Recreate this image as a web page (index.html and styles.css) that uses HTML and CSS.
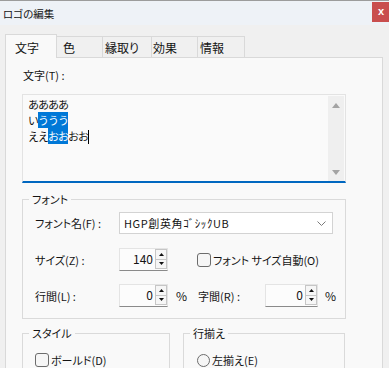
FILE: index.html
```html
<!DOCTYPE html>
<html lang="ja">
<head>
<meta charset="utf-8">
<link rel="stylesheet" href="styles.css">
</head>
<body>
<div class="window">
  <div class="titlebar">
    <span class="title">ロゴの編集</span>
    <span class="close">x</span>
  </div>
  <div class="content">
    <div class="tabs">
      <div class="tab tab1 selected">文字</div>
      <div class="tab tab2">色</div>
      <div class="tab tab3">縁取り</div>
      <div class="tab tab4">効果</div>
      <div class="tab tab5">情報</div>
    </div>
    <div class="panel">
      <div class="field-label">文字(T) :</div>
      <div class="textbox">
        <div class="text">
          <div class="line">ああああ</div>
          <div class="line">い<span class="hl">ううう</span></div>
          <div class="line">ええ<span class="hl">おお</span>おお<span class="caret"></span></div>
        </div>
        <div class="vscroll">
          <svg class="arrow" width="8" height="5" viewBox="0 0 8 5"><path d="M0 5 L4 0 L8 5 Z" fill="#a3a3a3"/></svg>
          <svg class="arrow" width="8" height="5" viewBox="0 0 8 5"><path d="M0 0 L4 5 L8 0 Z" fill="#a3a3a3"/></svg>
        </div>
      </div>

      <div class="group font-group">
        <span class="legend">フォント</span>
        <div class="rows">
          <div class="row">
            <span class="row-label">フォント名(F) :</span>
            <div class="select">
              <span class="select-text">HGP創英角ｺﾞｼｯｸUB</span>
              <svg class="chev" width="9" height="5" viewBox="0 0 9 5"><path d="M0.5 0.5 L4.5 4.5 L8.5 0.5" fill="none" stroke="#7a7a7a" stroke-width="1"/></svg>
            </div>
          </div>
          <div class="row">
            <span class="row-label">サイズ(Z) :</span>
            <div class="spin">
              <span class="spin-value">140</span>
              <div class="spin-btns">
                <span class="spin-btn"><svg width="5" height="3" viewBox="0 0 5 3"><path d="M0 3 L2.5 0 L5 3 Z" fill="#111"/></svg></span>
                <span class="spin-btn"><svg width="5" height="3" viewBox="0 0 5 3"><path d="M0 0 L2.5 3 L5 0 Z" fill="#111"/></svg></span>
              </div>
            </div>
            <span class="check auto-check"></span>
            <span class="check-text">フォント サイズ自動(O)</span>
          </div>
          <div class="row">
            <span class="row-label">行間(L) :</span>
            <div class="spin">
              <span class="spin-value">0</span>
              <div class="spin-btns">
                <span class="spin-btn"><svg width="5" height="3" viewBox="0 0 5 3"><path d="M0 3 L2.5 0 L5 3 Z" fill="#111"/></svg></span>
                <span class="spin-btn"><svg width="5" height="3" viewBox="0 0 5 3"><path d="M0 0 L2.5 3 L5 0 Z" fill="#111"/></svg></span>
              </div>
            </div>
            <span class="pct pct1">%</span>
            <span class="row-label2">字間(R) :</span>
            <div class="spin spin-wide">
              <span class="spin-value">0</span>
              <div class="spin-btns">
                <span class="spin-btn"><svg width="5" height="3" viewBox="0 0 5 3"><path d="M0 3 L2.5 0 L5 3 Z" fill="#111"/></svg></span>
                <span class="spin-btn"><svg width="5" height="3" viewBox="0 0 5 3"><path d="M0 0 L2.5 3 L5 0 Z" fill="#111"/></svg></span>
              </div>
            </div>
            <span class="pct pct2">%</span>
          </div>
        </div>
      </div>

      <div class="bottom-groups">
        <div class="group style-group">
          <span class="legend">スタイル</span>
          <div class="opt-row">
            <span class="check"></span>
            <span class="check-text">ボールド(D)</span>
          </div>
        </div>
        <div class="group align-group">
          <span class="legend">行揃え</span>
          <div class="opt-row">
            <span class="radio"></span>
            <span class="check-text">左揃え(E)</span>
          </div>
        </div>
      </div>
    </div>
  </div>
</div>
</body>
</html>
```

FILE: styles.css
```css
* { box-sizing: border-box; }

html, body {
  margin: 0;
  padding: 0;
  width: 389px;
  height: 368px;
  overflow: hidden;
  background: #f0f0f0;
}

body {
  font-family: "Noto Sans CJK JP", "Noto Sans", sans-serif;
  font-size: 11px;
  font-feature-settings: "palt";
  color: #141414;
}

.window {
  width: 389px;
  height: 368px;
  border-top: 1px solid #9c9c9c;
  overflow: hidden;
}

.titlebar {
  display: flex;
  align-items: flex-start;
  height: 24px;
  background: #eef2f7;
}

.title {
  padding: 5px 0 0 3px;
  line-height: 16px;
  font-size: 10.5px;
}

.close {
  margin-left: auto;
  margin-top: 1px;
  width: 17px;
  height: 20px;
  background: #c94e4e;
  color: #fff;
  font-family: "Liberation Sans", sans-serif;
  font-size: 11px;
  font-weight: bold;
  line-height: 18px;
  text-align: center;
  padding-left: 1px;
}

.content {
  padding: 9px 6px 0 5px;
}

.tabs {
  display: flex;
  align-items: flex-end;
  height: 23px;
  font-size: 12px;
}

.tab {
  height: 21px;
  border: 1px solid #d9d9d9;
  border-bottom: none;
  border-left: none;
  background: #f0f0f0;
  line-height: 16px;
  padding-top: 3px;
}

.tab.selected {
  position: relative;
  z-index: 1;
  height: 24px;
  margin-bottom: -1px;
  border-left: 1px solid #d9d9d9;
  background: #f9f9f9;
  padding-top: 5px;
}

.tab1 { width: 52px; padding-left: 9px; }
.tab2 { width: 46px; padding-left: 6px; }
.tab3 { width: 49px; padding-left: 2px; }
.tab4 { width: 46px; padding-left: 1px; }
.tab5 { width: 47px; padding-left: 2px; }

.panel {
  width: 378px;
  height: 330px;
  border: 1px solid #d9d9d9;
  background: #f9f9f9;
  padding: 9px 0 0 16px;
}

.field-label {
  line-height: 16px;
  padding-left: 1px;
}

.textbox {
  display: flex;
  width: 324px;
  height: 89px;
  margin-top: 11px;
  border: 1px solid #e3e3e3;
  border-bottom: 2px solid #0067c0;
  background: #fafafa;
}

.text {
  flex: 1;
  padding: 1px 0 0 5px;
  font-feature-settings: normal;
  letter-spacing: -1px;
}

.line {
  line-height: 16px;
  height: 16px;
}

.hl {
  background: #0078d7;
  color: #fff;
}

.caret {
  display: inline-block;
  width: 1px;
  height: 14px;
  background: #000;
  vertical-align: -3px;
  margin-left: 0;
}

.vscroll {
  width: 16px;
  margin: 1px 1px 0 0;
  background: #efefef;
  display: flex;
  flex-direction: column;
  justify-content: space-between;
  align-items: center;
  padding: 7px 0 6px;
}

.arrow { display: block; }

.group {
  border: 1px solid #dadada;
}

.legend {
  display: block;
  width: fit-content;
  margin: -9px 0 0 6px;
  padding: 0 3px;
  line-height: 16px;
  background: #f9f9f9;
}

.font-group {
  width: 324px;
  margin-top: 16px;
}

.rows {
  display: flex;
  flex-direction: column;
  gap: 14px;
  padding: 5px 11px 11px 12px;
}

.row {
  display: flex;
  align-items: center;
  height: 22px;
}

.row > * { flex-shrink: 0; }

.row + .row { height: 23px; }
.row + .row + .row { margin-top: -1px; }

.row-label {
  width: 84px;
  line-height: 16px;
}

.select {
  width: 214px;
  height: 22px;
  border: 1px solid #d3d3d3;
  background: #fff;
  display: flex;
  align-items: center;
  padding: 0 6px 0 4px;
}

.select-text {
  flex: 1;
  letter-spacing: 0.6px;
  line-height: 16px;
}

.chev { display: block; }

.spin {
  width: 49px;
  height: 23px;
  display: flex;
  border: 1px solid #e4e4e4;
  border-bottom-color: #8a8a8a;
  background: #fcfcfc;
}

.spin-wide { width: 53px; }

.spin-value {
  flex: 1;
  text-align: right;
  padding-right: 2px;
  line-height: 20px;
  font-size: 12px;
}

.spin-btns {
  width: 12px;
  display: flex;
  flex-direction: column;
  padding: 0 0 1px;
}

.spin-btn {
  flex: 1;
  border: 1px solid #c6c6c6;
  background: #f6f6f6;
  display: flex;
  align-items: center;
  justify-content: center;
}

.spin-btn + .spin-btn { border-top: none; }

.spin-btn svg { display: block; }

.check {
  width: 14px;
  height: 14px;
  flex: none;
  border: 1px solid #6c6c6c;
  border-radius: 3px;
  background: #f6f6f6;
}

.auto-check { margin-left: 29px; }

.check-text {
  margin-left: 2px;
  line-height: 16px;
}

.pct { line-height: 16px; font-size: 12px; }
.pct1 { margin-left: 8px; width: 22px; }
.pct2 { margin-left: 7px; }

.row-label2 {
  width: 67px;
  line-height: 16px;
}

.bottom-groups {
  display: flex;
  gap: 13px;
  margin-top: 14px;
}

.style-group {
  width: 148px;
  height: 60px;
}

.align-group {
  width: 162px;
  height: 60px;
}

.opt-row {
  display: flex;
  align-items: center;
  margin-top: 11px;
  height: 16px;
  padding-left: 12px;
}

.align-group .opt-row { padding-left: 13px; }

.radio {
  width: 13px;
  height: 13px;
  flex: none;
  border: 1px solid #6c6c6c;
  border-radius: 50%;
  background: #f6f6f6;
}
```
